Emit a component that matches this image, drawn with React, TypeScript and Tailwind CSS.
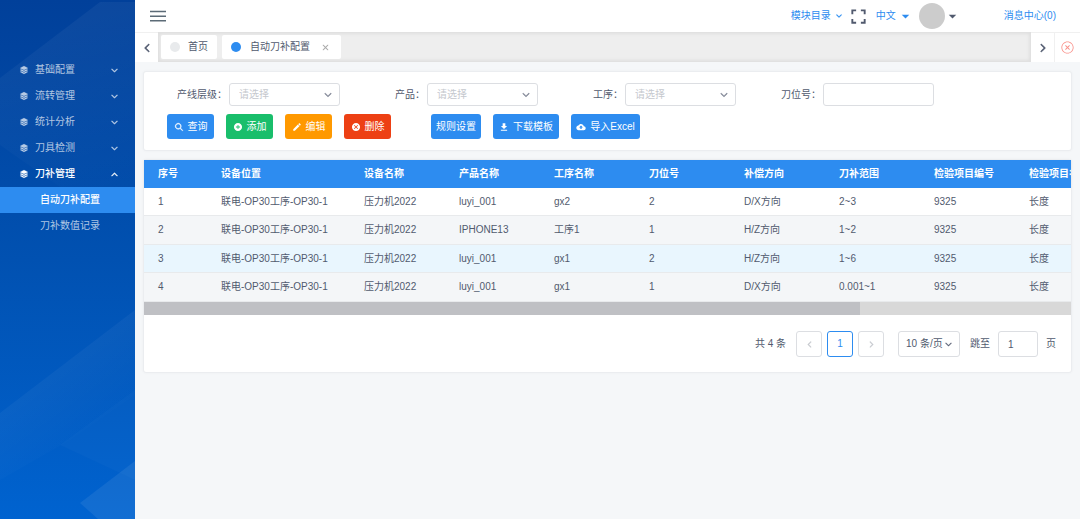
import { useState } from "react";
import type { ReactNode, UIEvent } from "react";
import {
  IoIosArrowBack,
  IoIosArrowDown,
  IoIosArrowForward,
  IoIosArrowUp,
  IoIosClose,
  IoIosCloseCircleOutline,
  IoIosSearch,
  IoLogoBuffer,
  IoMdAddCircle,
  IoMdArrowDropdown,
  IoMdCloseCircle,
  IoMdCloudUpload,
  IoMdCreate,
  IoMdDownload,
  IoMdExpand,
} from "react-icons/io";

const menus = ["基础配置", "流转管理", "统计分析", "刀具检测", "刀补管理"];

const columns = [
  "序号",
  "设备位置",
  "设备名称",
  "产品名称",
  "工序名称",
  "刀位号",
  "补偿方向",
  "刀补范围",
  "检验项目编号",
  "检验项目名称",
];

const rows = [
  ["1", "联电-OP30工序-OP30-1", "压力机2022", "luyi_001", "gx2", "2", "D/X方向", "2~3", "9325", "长度"],
  ["2", "联电-OP30工序-OP30-1", "压力机2022", "IPHONE13", "工序1", "1", "H/Z方向", "1~2", "9325", "长度"],
  ["3", "联电-OP30工序-OP30-1", "压力机2022", "luyi_001", "gx1", "2", "H/Z方向", "1~6", "9325", "长度"],
  ["4", "联电-OP30工序-OP30-1", "压力机2022", "luyi_001", "gx1", "1", "D/X方向", "0.001~1", "9325", "长度"],
];

const rowColors = ["bg-white", "bg-[#f4f6f8]", "bg-[#e9f6fe]", "bg-[#f4f6f8]"];

function Sidebar() {
  return (
    <aside className="relative w-[135px] shrink-0 overflow-hidden bg-linear-to-b from-[#01409a] via-[#0151b1] to-[#0063d0] pt-[57px]">
      <svg
        className="absolute inset-0 h-full w-full"
        viewBox="0 0 135 519"
        preserveAspectRatio="none"
        aria-hidden="true"
      >
        <defs>
          <linearGradient id="facetTop" x1="0.3" y1="0" x2="0.5" y2="1">
            <stop offset="0" stopColor="#fff" stopOpacity="0.05" />
            <stop offset="1" stopColor="#fff" stopOpacity="0" />
          </linearGradient>
          <linearGradient id="facetMid" x1="0.35" y1="0.2" x2="0.7" y2="0.8">
            <stop offset="0" stopColor="#fff" stopOpacity="0.05" />
            <stop offset="1" stopColor="#fff" stopOpacity="0" />
          </linearGradient>
        </defs>
        <polygon points="0,78 100,2 135,2 135,225 60,187 0,145" fill="url(#facetTop)" />
        <polygon points="0,413 135,310 135,395 70,440 0,480" fill="url(#facetMid)" />
        <polygon points="135,390 60,445 135,480" fill="#fff" fillOpacity="0.02" />
        <polygon points="80,503 135,461 135,519 98,519" fill="#fff" fillOpacity="0.07" />
      </svg>
      <nav className="relative">
        {menus.map((name, i) => {
          const open = i === menus.length - 1;
          return (
            <button
              key={name}
              aria-expanded={open}
              className={`flex h-[26px] w-full items-center pr-4 pl-[19px] text-left ${
                open ? "font-medium text-white" : "text-white/70"
              }`}
            >
              <IoLogoBuffer size={10} strokeWidth={16} />
              <span className="ml-1.5 flex-1">{name}</span>
              {open ? <IoIosArrowUp size={9} strokeWidth={24} /> : <IoIosArrowDown size={9} strokeWidth={24} />}
            </button>
          );
        })}
        <a href="#config" className="flex h-[26px] items-center bg-[#2d8cf0] pl-10 font-medium text-white">
          自动刀补配置
        </a>
        <a href="#records" className="flex h-[26px] items-center pl-10 text-white/70">
          刀补数值记录
        </a>
      </nav>
    </aside>
  );
}

function Header() {
  return (
    <header className="flex h-8 shrink-0 items-center bg-white pr-6 pl-[15px] text-[#2d8cf0]">
      <button aria-label="折叠菜单" className="text-[#5c6b77]">
        <svg width="16" height="12" viewBox="0 0 16 12" fill="none" stroke="currentColor" strokeWidth="1.6">
          <path d="M0 1.5h16M0 6.2h16M0 10.8h16" />
        </svg>
      </button>
      <button className="ml-auto flex items-center gap-1">
        模块目录
        <IoIosArrowDown size={8} strokeWidth={16} />
      </button>
      <button aria-label="全屏" className="ml-1.5 text-[#515a6e]">
        <IoMdExpand size={19} />
      </button>
      <button className="ml-2 flex items-center gap-0.5">
        中文
        <IoMdArrowDropdown size={15} />
      </button>
      <button aria-label="用户" className="ml-1.5 flex items-center text-[#515a6e]">
        <span className="size-[26px] rounded-full bg-[#ccc]" />
        <IoMdArrowDropdown size={15} />
      </button>
      <a href="#messages" className="ml-11">
        消息中心(0)
      </a>
    </header>
  );
}

function TabBar() {
  return (
    <div className="flex h-[30px] shrink-0 bg-white text-[#515a6e]">
      <button aria-label="向左" className="flex w-[23px] items-center justify-center border-t border-[#f0f0f0]">
        <IoIosArrowBack size={12} strokeWidth={24} />
      </button>
      <div className="flex flex-1 items-center gap-[5px] bg-[#eee] px-[3px] shadow-[inset_0_0_3px_2px_rgba(100,100,100,0.1)]">
        <a href="#home" className="flex h-6 items-center gap-2 rounded-xs bg-white px-[9px]">
          <span className="size-2.5 rounded-full bg-[#e8eaec]" />
          首页
        </a>
        <div className="flex h-6 items-center rounded-xs bg-white pr-2 pl-[9px]">
          <a href="#config" className="flex items-center gap-[9px]">
            <span className="size-2.5 rounded-full bg-[#2d8cf0]" />
            自动刀补配置
          </a>
          <button aria-label="关闭标签" className="ml-2 text-[#aaa]">
            <IoIosClose size={15} />
          </button>
        </div>
      </div>
      <button aria-label="向右" className="flex w-[23px] items-center justify-center border-t border-[#f0f0f0]">
        <IoIosArrowForward size={12} strokeWidth={24} />
      </button>
      <button
        aria-label="关闭全部"
        className="flex w-[26px] items-center justify-center border-t border-l border-[#f0f0f0] text-[#f98f88]"
      >
        <IoIosCloseCircleOutline size={15} />
      </button>
    </div>
  );
}

function Field({ id, label, select = true }: { id: string; label: string; select?: boolean }) {
  return (
    <div className="flex w-[198px] items-center justify-end gap-0.5 pr-0.5">
      <label htmlFor={id}>{label}：</label>
      <div className="relative w-[111px]">
        {select ? (
          <>
            <select
              id={id}
              defaultValue=""
              className="h-[23px] w-full appearance-none rounded-[3px] border border-[#dcdee2] bg-white px-[9px] text-[#c5c8ce]"
            >
              <option value="">请选择</option>
            </select>
            <IoIosArrowDown
              size={10}
              strokeWidth={20}
              className="pointer-events-none absolute top-[7px] right-[7px] text-[#808695]"
            />
          </>
        ) : (
          <input id={id} className="h-[23px] w-full rounded-[3px] border border-[#dcdee2] bg-white px-[9px]" />
        )}
      </div>
    </div>
  );
}

function ActionButton({ className, icon, children }: { className: string; icon?: ReactNode; children: ReactNode }) {
  return (
    <button className={`flex h-[25px] items-center justify-center rounded-[3px] text-white ${className}`}>
      {icon}
      {children}
    </button>
  );
}

function Filters() {
  return (
    <section className="rounded-[3px] border border-[#ebedf0] bg-white py-[11px] shadow-[0_0_3px_rgba(0,0,0,0.04)]">
      <div className="flex flex-wrap gap-y-2">
        <Field id="level" label="产线层级" />
        <Field id="product" label="产品" />
        <Field id="process" label="工序" />
        <Field id="position" label="刀位号" select={false} />
      </div>
      <div className="mt-2 flex flex-wrap gap-3 pl-[23px]">
        <ActionButton className="w-[47px] gap-1 bg-[#2d8cf0]" icon={<IoIosSearch size={10} strokeWidth={24} />}>
          查询
        </ActionButton>
        <ActionButton className="w-[47px] gap-1 bg-[#19be6b]" icon={<IoMdAddCircle size={10} />}>
          添加
        </ActionButton>
        <ActionButton className="w-[47px] gap-1 bg-[#ff9900]" icon={<IoMdCreate size={10} />}>
          编辑
        </ActionButton>
        <ActionButton className="w-[47px] gap-1 bg-[#ed4014]" icon={<IoMdCloseCircle size={10} />}>
          删除
        </ActionButton>
        <ActionButton className="ml-7 w-[50px] bg-[#2d8cf0]">规则设置</ActionButton>
        <ActionButton className="w-[66px] gap-1 bg-[#2d8cf0]" icon={<IoMdDownload size={10} />}>
          下载模板
        </ActionButton>
        <ActionButton className="w-[69px] gap-1 bg-[#2d8cf0]" icon={<IoMdCloudUpload size={10} />}>
          导入Excel
        </ActionButton>
      </div>
    </section>
  );
}

function Pagination() {
  const box = "flex h-[26px] items-center justify-center rounded-[3px] border bg-white";
  return (
    <div className="flex items-center justify-end pt-4 pr-[15px] pb-[15px]">
      <span className="mr-2.5">共 4 条</span>
      <div className="flex gap-[5px]">
        <button aria-label="上一页" className={`${box} w-[26px] border-[#dcdee2] text-[#c5c8ce]`}>
          <IoIosArrowBack size={9} strokeWidth={24} />
        </button>
        <button className={`${box} w-[26px] border-[#2d8cf0] text-[#2d8cf0]`}>1</button>
        <button aria-label="下一页" className={`${box} w-[26px] border-[#dcdee2] text-[#c5c8ce]`}>
          <IoIosArrowForward size={9} strokeWidth={24} />
        </button>
      </div>
      <div className="relative mr-2.5 ml-3.5">
        <select
          aria-label="每页条数"
          className="h-[26px] w-[62px] appearance-none rounded-[3px] border border-[#dcdee2] bg-white pl-[7px]"
        >
          <option>10 条/页</option>
        </select>
        <IoIosArrowDown size={9} strokeWidth={16} className="pointer-events-none absolute top-[9px] right-[7px]" />
      </div>
      <label htmlFor="jump" className="mr-2">
        跳至
      </label>
      <input
        id="jump"
        defaultValue="1"
        className="mr-2 h-[26px] w-10 rounded-[3px] border border-[#dcdee2] bg-white px-[9px]"
      />
      <span>页</span>
    </div>
  );
}

function DataTable() {
  const [offset, setOffset] = useState(0);
  const onScroll = (e: UIEvent<HTMLDivElement>) => {
    const el = e.currentTarget;
    setOffset((el.scrollLeft / el.scrollWidth) * 100);
  };
  return (
    <section className="rounded-[3px] border border-[#ebedf0] bg-white shadow-[0_0_3px_rgba(0,0,0,0.04)]">
      <div className="overflow-x-auto [scrollbar-width:none]" onScroll={onScroll}>
        <table className="h-[142px] w-[1202px] table-fixed border-collapse text-left">
          <colgroup>
            <col className="w-[63px]" />
            <col className="w-[143px]" />
            {columns.slice(2, -1).map((c) => (
              <col key={c} className="w-[95px]" />
            ))}
            <col />
          </colgroup>
          <thead>
            <tr className="h-7 bg-[#2d8cf0] text-white">
              {columns.map((c) => (
                <th key={c} className="py-0 pl-3.5 font-bold">
                  {c}
                </th>
              ))}
            </tr>
          </thead>
          <tbody>
            {rows.map((row, i) => (
              <tr key={row[0]} className={`border-b border-[#e8eaec] ${rowColors[i]}`}>
                {row.map((cell, j) => (
                  <td key={columns[j]} className="py-0 pl-3.5">
                    {cell}
                  </td>
                ))}
              </tr>
            ))}
          </tbody>
        </table>
      </div>
      <div className="h-[13px] bg-[#d8d8d8]">
        <div className="h-full w-[77.2%] bg-[#bfc0c4]" style={{ marginLeft: `${offset}%` }} />
      </div>
      <Pagination />
    </section>
  );
}

export default function App() {
  return (
    <div className="flex min-h-screen bg-[#f5f7f9] font-['Liberation_Sans','Noto_Sans_CJK_SC',sans-serif] text-[10px] leading-[14px] text-[#515a6e]">
      <Sidebar />
      <div className="flex min-w-0 flex-1 flex-col">
        <Header />
        <TabBar />
        <main className="flex flex-col gap-2 px-2 pt-[9px] pb-2">
          <Filters />
          <DataTable />
        </main>
      </div>
    </div>
  );
}
